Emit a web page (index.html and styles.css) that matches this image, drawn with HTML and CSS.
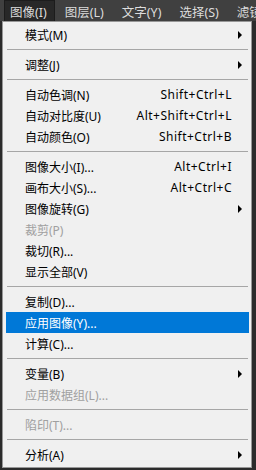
FILE: index.html
```html
<!DOCTYPE html>
<html lang="zh-CN">
<head>
    <meta charset="UTF-8">
    <meta name="viewport" content="width=device-width, initial-scale=1.0">
    <title>图像菜单</title>
    <link rel="stylesheet" href="styles.css">
</head>
<body>

<div class="menubar">
    <span class="menubar-item open">图像(I)</span>
    <span class="menubar-item">图层(L)</span>
    <span class="menubar-item">文字(Y)</span>
    <span class="menubar-item">选择(S)</span>
    <span class="menubar-item">滤镜</span>
</div>

<div class="menu">
    <div class="item"><span class="label">模式(M)</span><span class="sub"><svg width="5" height="8"><polygon points="0,0 4,4 0,8"/></svg></span></div>
    <div class="sep"></div>
    <div class="item"><span class="label">调整(J)</span><span class="sub"><svg width="5" height="8"><polygon points="0,0 4,4 0,8"/></svg></span></div>
    <div class="sep"></div>
    <div class="item"><span class="label">自动色调(N)</span><span class="key">Shift+Ctrl+L</span><span class="sub"></span></div>
    <div class="item"><span class="label">自动对比度(U)</span><span class="key">Alt+Shift+Ctrl+L</span><span class="sub"></span></div>
    <div class="item"><span class="label">自动颜色(O)</span><span class="key">Shift+Ctrl+B</span><span class="sub"></span></div>
    <div class="sep"></div>
    <div class="item"><span class="label">图像大小(I)...</span><span class="key">Alt+Ctrl+I</span><span class="sub"></span></div>
    <div class="item"><span class="label">画布大小(S)...</span><span class="key">Alt+Ctrl+C</span><span class="sub"></span></div>
    <div class="item"><span class="label">图像旋转(G)</span><span class="sub"><svg width="5" height="8"><polygon points="0,0 4,4 0,8"/></svg></span></div>
    <div class="item disabled"><span class="label">裁剪(P)</span><span class="sub"></span></div>
    <div class="item"><span class="label">裁切(R)...</span><span class="sub"></span></div>
    <div class="item"><span class="label">显示全部(V)</span><span class="sub"></span></div>
    <div class="sep"></div>
    <div class="item"><span class="label">复制(D)...</span><span class="sub"></span></div>
    <div class="item active"><span class="label">应用图像(Y)...</span><span class="sub"></span></div>
    <div class="item"><span class="label">计算(C)...</span><span class="sub"></span></div>
    <div class="sep"></div>
    <div class="item"><span class="label">变量(B)</span><span class="sub"><svg width="5" height="8"><polygon points="0,0 4,4 0,8"/></svg></span></div>
    <div class="item disabled"><span class="label">应用数据组(L)...</span><span class="sub"></span></div>
    <div class="sep"></div>
    <div class="item disabled"><span class="label">陷印(T)...</span><span class="sub"></span></div>
    <div class="sep"></div>
    <div class="item"><span class="label">分析(A)</span><span class="sub"><svg width="5" height="8"><polygon points="0,0 4,4 0,8"/></svg></span></div>
</div>

</body>
</html>
```

FILE: styles.css
```css
* {
    box-sizing: border-box;
}
body {
    margin: 0;
    background-color: #2b2b2b;
    font-family: "Noto Sans", "Noto Sans CJK SC", sans-serif;
    font-size: 12px;
    width: 256px;
    height: 470px;
    overflow: hidden;
}
.menubar {
    display: flex;
    height: 21px;
    background-color: #404040;
    padding-left: 4px;
    white-space: nowrap;
    overflow: hidden;
}
.menubar-item {
    display: flex;
    align-items: center;
    flex-shrink: 0;
    padding: 0 5px;
    margin-right: 6px;
    font-size: 12.5px;
    color: #dcdcdc;
    border: 1px solid transparent;
    border-bottom: none;
}
.menubar-item.open {
    padding-right: 7px;
    margin-right: 4px;
    background-color: #282828;
    border-color: #1c1c1c;
}
.menu {
    width: 250px;
    margin-left: 2px;
    padding: 2px 2px 2px 3px;
    background-color: #f0f0f0;
    border: 1px solid #979797;
}
.item {
    display: flex;
    align-items: center;
    height: 21px;
    padding-left: 19px;
    color: #000;
    white-space: nowrap;
}
.item .label {
    flex: 1;
}
.item .key {
    text-align: right;
    letter-spacing: 0.5px;
}
.item .sub {
    width: 17px;
    padding-left: 6px;
    display: flex;
    align-items: center;
}
.item .sub svg {
    fill: #000;
}
.item.disabled {
    color: #a0a0a0;
}
.item.active {
    background-color: #0078d7;
    color: #fff;
}
.sep {
    height: 1px;
    margin: 4px 1px;
    background-color: #a6a6a6;
}
```
